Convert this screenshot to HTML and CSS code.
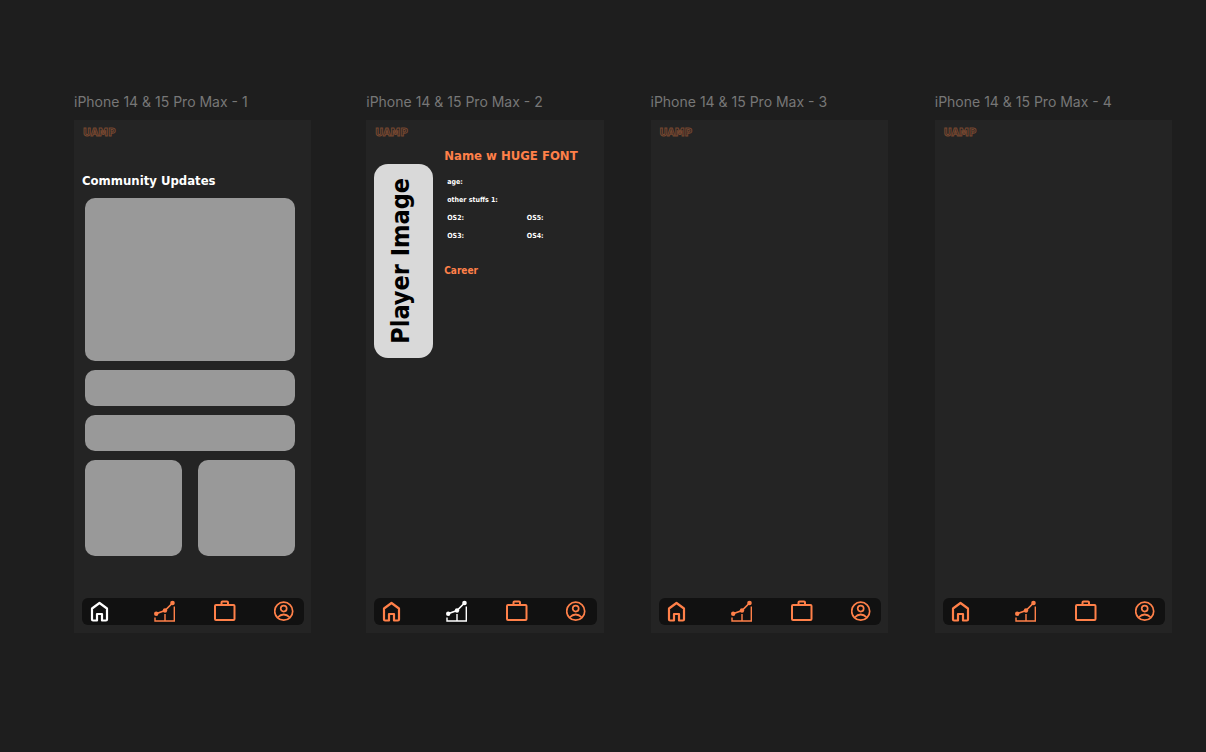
FILE: index.html
```html
<!DOCTYPE html>
<html lang="en">
<head>
<meta charset="utf-8">
<title>iPhone frames</title>
<link rel="stylesheet" href="styles.css">
</head>
<body>
<svg class="symbols" aria-hidden="true">
  <symbol id="home" viewBox="0 0 22 22"><path d="M2 8.500 9.500 3l7.500 5.500v11q0 1-1 1h-4V14H7v6.500H3q-1 0-1-1z" fill="none" stroke="currentColor" stroke-width="2.200" stroke-linejoin="round"/></symbol>
  <symbol id="chart" viewBox="0 0 22 22"><path d="M2 13.700 11 10.500 18.500 3" fill="none" stroke="currentColor" stroke-width="1.700"/><path d="M1 17.500V21h19.300V6.500M11 14v7" fill="none" stroke="currentColor" stroke-width="1.400"/><g fill="currentColor"><circle cx="2.200" cy="13.700" r="2.200"/><circle cx="11" cy="10.500" r="2.200"/><circle cx="18.500" cy="3" r="2.300"/></g></symbol>
  <symbol id="case" viewBox="0 0 22 22"><path d="M2 5h17.500q1 0 1 1v13q0 1-1 1H2q-1 0-1-1V6q0-1 1-1zM7.500 5V2.500q0-1 1-1H13q1 0 1 1V5" fill="none" stroke="currentColor" stroke-width="2"/></symbol>
  <symbol id="user" viewBox="0 0 22 22"><g fill="none" stroke="currentColor" stroke-width="1.700"><circle cx="9.700" cy="11.200" r="9"/><circle cx="9.700" cy="8.600" r="3"/><path d="M3.500 17.500q6.200-6 12.400 0"/></g></symbol>
</svg>
<main class="board">
  <section class="phone">
    <h2 class="label">iPhone 14 &amp; 15 Pro Max - 1</h2>
    <div class="screen">
      <p class="logo">UAMP</p>
      <h3 class="heading">Community Updates</h3>
      <div class="updates">
        <div class="tile hero"></div>
        <div class="tile bar"></div>
        <div class="tile bar"></div>
        <div class="tile square"></div>
        <div class="tile square"></div>
      </div>
      <nav class="tabs">
        <button class="tab active" aria-label="Home"><svg><use href="#home"/></svg></button>
        <button class="tab" aria-label="Stats"><svg><use href="#chart"/></svg></button>
        <button class="tab" aria-label="Career"><svg><use href="#case"/></svg></button>
        <button class="tab" aria-label="Profile"><svg><use href="#user"/></svg></button>
      </nav>
    </div>
  </section>
  <section class="phone">
    <h2 class="label">iPhone 14 &amp; 15 Pro Max - 2</h2>
    <div class="screen">
      <p class="logo">UAMP</p>
      <div class="player">
        <div class="portrait"><span>Player Image</span></div>
        <div class="info">
          <h3 class="name">Name w HUGE FONT</h3>
          <div class="stats">
            <span class="wide">age:</span>
            <span class="wide">other stuffs 1:</span>
            <span>OS2:</span><span>OS5:</span>
            <span>OS3:</span><span>OS4:</span>
          </div>
          <h4 class="career">Career</h4>
        </div>
      </div>
      <nav class="tabs">
        <button class="tab" aria-label="Home"><svg><use href="#home"/></svg></button>
        <button class="tab active" aria-label="Stats"><svg><use href="#chart"/></svg></button>
        <button class="tab" aria-label="Career"><svg><use href="#case"/></svg></button>
        <button class="tab" aria-label="Profile"><svg><use href="#user"/></svg></button>
      </nav>
    </div>
  </section>
  <section class="phone">
    <h2 class="label">iPhone 14 &amp; 15 Pro Max - 3</h2>
    <div class="screen">
      <p class="logo">UAMP</p>
      <nav class="tabs">
        <button class="tab" aria-label="Home"><svg><use href="#home"/></svg></button>
        <button class="tab" aria-label="Stats"><svg><use href="#chart"/></svg></button>
        <button class="tab" aria-label="Career"><svg><use href="#case"/></svg></button>
        <button class="tab" aria-label="Profile"><svg><use href="#user"/></svg></button>
      </nav>
    </div>
  </section>
  <section class="phone">
    <h2 class="label">iPhone 14 &amp; 15 Pro Max - 4</h2>
    <div class="screen">
      <p class="logo">UAMP</p>
      <nav class="tabs">
        <button class="tab" aria-label="Home"><svg><use href="#home"/></svg></button>
        <button class="tab" aria-label="Stats"><svg><use href="#chart"/></svg></button>
        <button class="tab" aria-label="Career"><svg><use href="#case"/></svg></button>
        <button class="tab" aria-label="Profile"><svg><use href="#user"/></svg></button>
      </nav>
    </div>
  </section>
</main>
</body>
</html>
```
FILE: styles.css
```css
* { box-sizing: border-box; margin: 0; }
body {
  background: #1e1e1e;
  color: #fff;
  font-family: "DejaVu Sans Condensed", "DejaVu Sans", sans-serif;
  font-weight: 700;
}
.symbols { display: none; }
.board {
  display: grid;
  grid-template-columns: minmax(0, 245fr) repeat(3, minmax(0, 237fr));
  gap: 47px;
  padding: 92px 34px 0 74px;
}
.phone:first-child { padding-right: 8px; }
.label {
  color: #777;
  font: 400 14px/20px Inter, sans-serif;
  white-space: nowrap;
  margin-bottom: 8px;
}
.screen {
  display: flex;
  flex-direction: column;
  min-height: 513px;
  padding: 4px 7px 8px 8px;
  background: #242424;
}
.logo {
  padding-left: 1px;
  font-size: 11px;
  line-height: 18px;
  color: #242424;
  -webkit-text-stroke: 1px #764730;
}
.heading { margin-top: 29px; font-size: 13px; line-height: 20px; white-space: nowrap; }
.updates {
  display: grid;
  grid-template-columns: 1fr 1fr;
  gap: 9px 16px;
  margin-top: 7px;
  padding: 0 9px 0 3px;
}
.tile { border-radius: 10px; background: #999; }
.hero { grid-column: 1 / -1; height: 163px; }
.bar { grid-column: 1 / -1; height: 36px; }
.square { height: 96px; }
.tabs {
  display: grid;
  grid-template-columns: 64fr 60fr 60fr 22fr;
  margin-top: auto;
  padding: 2px 8px 3px;
  border-radius: 6px;
  background: #111;
}
.tab { display: block; width: 22px; height: 22px; padding: 0; border: 0; background: none; color: #ff8049; }
.tab svg { display: block; width: 22px; height: 22px; overflow: visible; }
.active { color: #fff; }
.player { display: flex; gap: 11px; margin-top: 4px; }
.portrait {
  display: flex;
  align-items: center;
  justify-content: center;
  width: 59px;
  height: 194px;
  margin-top: 18px;
  padding-right: 6px;
  border-radius: 14px;
  background: #d9d9d9;
  color: #000;
  font-size: 25px;
  line-height: 32px;
}
.portrait span { writing-mode: vertical-rl; transform: rotate(180deg); white-space: nowrap; }
.info { flex: 1; min-width: 0; }
.name { color: #ff8049; font-size: 13px; line-height: 20px; white-space: nowrap; }
.stats {
  display: grid;
  grid-template-columns: 80fr 70fr;
  margin-top: 7px;
  padding-left: 3px;
  font-size: 7px;
  line-height: 18px;
}
.wide { grid-column: 1 / -1; }
.career { margin-top: 18px; color: #ff8049; font-size: 10px; line-height: 16px; }
```
